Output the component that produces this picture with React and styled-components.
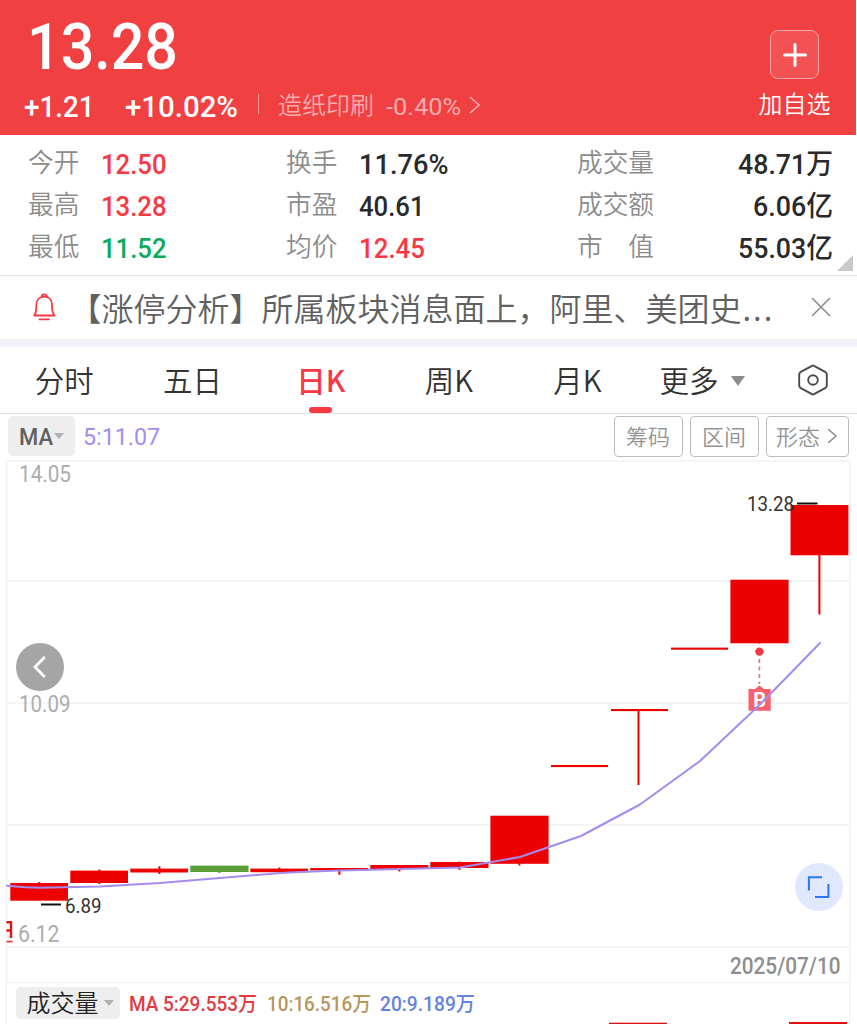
import React from "react";
import styled, { createGlobalStyle } from "styled-components";

const CJK = '"Noto Sans CJK SC", sans-serif';
const DIGITS = 'Roboto, "Noto Sans CJK SC", sans-serif';

const Global = createGlobalStyle`
  * { box-sizing: border-box; }
  body { margin: 0; background: #fff; font-family: ${CJK}; overflow: hidden; }
  svg { display: block; flex: none; }
`;

const Page = styled.main`
  width: 857px;
  height: 1024px;
  overflow: hidden;
  background: #fff;
  display: flex;
  flex-direction: column;
`;

/* Condensed figures: the glyphs are fitted to the given width. */
const FigureSvg = styled.svg`
  overflow: visible;
  font-family: ${DIGITS};
  font-size: ${(p) => p.$size}px;
  font-weight: ${(p) => p.$weight};
  fill: ${(p) => p.$color};
`;

function Figure({ children, width, size, color, weight = 500 }) {
  const h = Math.round(size * 0.72);
  return (
    <FigureSvg width={width} height={h} $size={size} $color={color} $weight={weight}>
      <text x="0" y={h} textLength={width} lengthAdjust="spacingAndGlyphs">{children}</text>
    </FigureSvg>
  );
}

const Header = styled.header`
  flex: none;
  width: 856px;
  height: 135px;
  background: #f04042;
  display: flex;
  justify-content: space-between;
`;

const Quote = styled.div`
  padding: 23px 0 0 27px;
`;

const ChangeRow = styled.div`
  display: flex;
  align-items: center;
  height: 30px;
  margin: 22px 0 0 -3px;
`;

const Divider = styled.i`
  width: 1px;
  height: 20px;
  margin: 0 19px 4px 20px;
  background: #f79a9b;
`;

const Sector = styled.span`
  width: 97px;
  margin: -4px 10.5px 0 0;
  font-size: 24px;
  line-height: 30px;
  font-weight: 350;
  color: #f9abac;
  white-space: nowrap;
`;

const Spacer = styled.span`
  width: ${(p) => p.$w}px;
`;

const AddButton = styled.button`
  border: 0;
  padding: 30px 25.5px 0 0;
  background: none;
  display: flex;
  flex-direction: column;
  align-items: center;
  color: #fff;
  font: 350 24px/34px ${CJK};
`;

const AddBox = styled.span`
  width: 49px;
  height: 49px;
  border: 1px solid #f8a3a4;
  border-radius: 8px;
  background: #f25254;
  margin-bottom: 7px;
  display: grid;
  place-items: center;
`;

const Stats = styled.section`
  flex: none;
  height: 141px;
  border-bottom: 1px solid #e8e8e8;
  padding: 7px 24px 0 28px;
  display: grid;
  grid-template-columns: 258px 291px 1fr;
  grid-auto-rows: 42px;
  position: relative;
`;

const Stat = styled.div`
  display: flex;
  align-items: center;
  justify-content: ${(p) => (p.$spread ? "space-between" : "flex-start")};
  padding-top: 1px;
`;

const StatLabel = styled.span`
  width: ${(p) => p.$w}px;
  font-size: 25.7px;
  line-height: 38px;
  font-weight: 350;
  color: #8c8c8c;
  white-space: pre;
  margin-top: -6px;
`;

const Corner = styled.i`
  position: absolute;
  right: 4px;
  bottom: 4px;
  border-style: solid;
  border-width: 0 0 16px 16px;
  border-color: transparent transparent #c9c9c9 transparent;
`;

const Notice = styled.section`
  flex: none;
  height: 63px;
  padding: 0 26px 0 33px;
  display: flex;
  align-items: center;
`;

const NoticeText = styled.p`
  flex: 1;
  margin: 0 0 2px 13.5px;
  font-size: 32px;
  line-height: 46px;
  font-weight: 350;
  color: #606060;
  white-space: nowrap;
`;

const Dots = styled.span`
  letter-spacing: 2px;
  margin-left: 1px;
`;

const Band = styled.div`
  flex: none;
  height: 8px;
  background: #f2f3f9;
`;

const Tabs = styled.nav`
  flex: none;
  height: 67px;
  border-bottom: 1px solid #e0e0e0;
  display: flex;
`;

const Tab = styled.div`
  width: 128.3px;
  display: flex;
  flex-direction: column;
  align-items: center;
  justify-content: space-between;
  padding-top: 11px;
  font-size: 29.5px;
  line-height: 42px;
  font-weight: ${(p) => (p.$active ? 500 : 350)};
  color: ${(p) => (p.$active ? "#f93844" : "#333")};
  &::after {
    content: "";
    width: 23px;
    height: 6px;
    border-radius: 3px;
    background: ${(p) => (p.$active ? "#f93844" : "transparent")};
  }
`;

const MoreTab = styled.div`
  width: 156.5px;
  padding: 11px 0 0 18px;
  display: flex;
  gap: 12px;
  font-size: 29.5px;
  line-height: 42px;
  font-weight: 350;
  color: #333;
`;

const Caret = styled.i`
  align-self: ${(p) => (p.$top ? "flex-start" : "center")};
  margin-top: ${(p) => p.$top || 0}px;
  border: solid transparent;
  border-width: ${(p) => p.$h}px ${(p) => p.$half}px 0;
  border-top-color: ${(p) => p.$color};
`;

const Toolbar = styled.div`
  flex: none;
  height: 46px;
  padding: 2px 8px 4px;
  display: flex;
  align-items: center;
`;

const Chip = styled.span`
  flex: none;
  width: ${(p) => p.$w}px;
  height: ${(p) => p.$h}px;
  padding-left: ${(p) => p.$pad || 0}px;
  border-radius: 5px;
  background: #eee;
  display: flex;
  align-items: center;
  justify-content: center;
  gap: ${(p) => p.$gap}px;
  font-size: 24px;
  line-height: 30px;
  font-weight: 350;
  color: #222;
`;

const ChipLabel = styled.span`
  margin-top: -2px;
`;

const ToolButtons = styled.div`
  margin-left: auto;
  display: flex;
  gap: 7px;
`;

const ToolButton = styled.button`
  width: ${(p) => p.$w}px;
  height: 41px;
  padding: 0 1px 3px 0;
  border: 1.5px solid #bdbdbd;
  border-radius: 4px;
  background: #fff;
  display: flex;
  align-items: center;
  justify-content: center;
  gap: 8px;
  font: 350 22px/32px ${CJK};
  color: #949494;
`;

const ChartArea = styled.section`
  flex: none;
  height: 523px;
  position: relative;
  svg text { font-family: ${DIGITS}; }
`;

const RoundButton = styled.button`
  position: absolute;
  left: ${(p) => p.$x}px;
  top: ${(p) => p.$y}px;
  width: 48px;
  height: 48px;
  padding: 0;
  border: 0;
  border-radius: 50%;
  background: ${(p) => p.$bg};
  display: grid;
  place-items: center;
`;

const Volume = styled.section`
  flex: none;
  height: 41px;
  margin: 0 7px 0 6px;
  border: solid #f2f2f2;
  border-width: 0 1.5px;
  display: flex;
  flex-direction: column;
`;

const VolumeHead = styled.div`
  height: 38px;
  padding: 4px 0 2px 9px;
  display: flex;
  align-items: center;
`;

const STATS = [
  ["今开", "12.50", "#f93844", 65.5], ["换手", "11.76%", "#2a2a2a", 89.5], ["成交量", "48.71万", "#2a2a2a", 95],
  ["最高", "13.28", "#f93844", 65.5], ["市盈", "40.61", "#2a2a2a", 65.5], ["成交额", "6.06亿", "#2a2a2a", 80],
  ["最低", "11.52", "#0bab5c", 65.5], ["均价", "12.45", "#f93844", 66], ["市　值", "55.03亿", "#2a2a2a", 95],
];

const RED = "#ed0000";
/* left, top, width, height, wick top, wick bottom */
const CANDLES = [
  [10.3, 883, 57.7, 17.7, 882, 900],
  [70.3, 870.6, 57.7, 12.4, 869.5, 884],
  [130.3, 868.6, 57.7, 3.9, 866.3, 874],
  [190.3, 865.6, 58.2, 6.4, 866, 873, "#5b9e37"],
  [250.3, 868.6, 57.7, 3.6, 867.5, 872],
  [310.3, 868, 57.7, 2.5, 868, 874.8],
  [370.3, 865, 57.9, 4, 865, 871.5],
  [430.3, 862, 58.2, 6, 861.5, 869.8],
  [490.4, 815.7, 58.2, 48.1, 816, 865.5],
  [551, 765, 57, 2.1, 765, 766],
  [611, 709, 57, 2.1, 709, 785],
  [671, 647.6, 57, 2.1, 648, 649],
  [730.4, 579.7, 58.2, 63.6, 580, 643.5],
  [790.5, 505, 57.9, 50.3, 505, 614.5],
];
const MA5 = "7,885.7 25,887.2 40,887.8 100,886.6 160,883 220,878 280,873 300,872 340,870.4 400,869 460,867.6 520,857 581,836 640,804.5 700,761 760,704.5 820,643";

function AxisText({ x, y, w, children, size = 24, color = "#adadad" }) {
  return <text x={x} y={y} textLength={w} lengthAdjust="spacingAndGlyphs" fontSize={size} fill={color}>{children}</text>;
}

function KChart() {
  return (
    <svg width="857" height="523" viewBox="0 460 857 523">
      <g fill="none" stroke="#f2f2f2" strokeWidth="1.6">
        <path d="M6.5 983V460.8H849.8V983" />
        <path d="M6.5 581H850M6.5 703H850M6.5 825H850M6.5 947H850M6.5 982.8H850" />
      </g>
      <AxisText x={19} y={482.3} w={52}>14.05</AxisText>
      <AxisText x={19} y={712} w={51.5}>10.09</AxisText>
      <AxisText x={18} y={942} w={41.5}>6.12</AxisText>
      {CANDLES.map(([x, y, w, h, t, b, c = RED]) => (
        <g key={x} fill={c}>
          <rect x={x} y={y} width={w} height={h} />
          <rect x={Math.round(x / 10) * 10 + (x % 10 > 0.8 ? 27.5 : 28.4)} y={t} width="2" height={b - t} />
        </g>
      ))}
      <path d="M797 503.4H817.5M41 904.6H61" stroke="#111" strokeWidth="2" />
      <AxisText x={747} y={511} w={47} size={20} color="#333">13.28</AxisText>
      <AxisText x={65} y={912.5} w={36.5} size={20} color="#333">6.89</AxisText>
      <path d="M6.5 922.2H12M11 921V938M6.5 930.5H10.5" fill="none" stroke="#e81212" strokeWidth="2.4" />
      <path d="M6.5 941.6H12.5" stroke="#d83030" strokeWidth="1.6" />
      <circle cx="759.4" cy="651.6" r="4.2" fill="#f93844" />
      <path d="M759.4 659V684" stroke="#f2707a" strokeWidth="1.6" strokeDasharray="4 3.5" />
      <path d="M748.5 689H755L759.4 685.5L764 689H770.7V710.7H748.5Z" fill="#f8606c" />
      <text x="759.6" y="707" textAnchor="middle" fontSize="20" fontWeight="700" fill="#fff">B</text>
      <polyline points={MA5} fill="none" stroke="#a58bf0" strokeWidth="2" strokeLinejoin="round" strokeLinecap="round" />
      <text x="730" y="974" textLength="110.5" lengthAdjust="spacingAndGlyphs" fontSize="23" fontWeight="500" fill="#8e8e8e">2025/07/10</text>
    </svg>
  );
}

export default function App() {
  return (
    <Page>
      <Global />
      <Header>
        <Quote>
          <Figure width={151} size={64.5} color="#fff">13.28</Figure>
          <ChangeRow>
            <Figure width={70.5} size={29} color="#fff">+1.21</Figure>
            <Spacer $w={30.5} />
            <Figure width={113} size={29} color="#fff">+10.02%</Figure>
            <Divider />
            <Sector>造纸印刷</Sector>
            <Figure width={75} size={24.5} color="#f9abac" weight={400}>-0.40%</Figure>
            <Spacer $w={8} />
            <svg width="12" height="20" fill="none" stroke="#f9abac" strokeWidth="1.6"><path d="M1 1L10 9L1 17" /></svg>
          </ChangeRow>
        </Quote>
        <AddButton>
          <AddBox>
            <svg width="26" height="26" stroke="#fff" strokeWidth="3" strokeLinecap="round"><path d="M2.5 13H23.5M13 2.5V23.5" /></svg>
          </AddBox>
          加自选
        </AddButton>
      </Header>

      <Stats>
        {STATS.map(([label, value, color, width], i) => (
          <Stat key={label} $spread={i % 3 === 2}>
            <StatLabel $w={i % 3 === 2 ? 80 : 72.7}>{label}</StatLabel>
            <Figure width={width} size={28} color={color}>{value}</Figure>
          </Stat>
        ))}
        <Corner />
      </Stats>

      <Notice>
        <svg width="23" height="29" fill="none" stroke="#f93844" strokeWidth="1.8" strokeLinejoin="round" strokeLinecap="round">
          <path d="M1.2 22.5C3.2 20 3.4 18 3.4 12C3.4 7 6.5 3.7 11.2 3.7S19 7 19 12C19 18 19.5 20 21.5 22.5ZM8.5 3.7C9 .6 13.5 .6 14 3.7M6.5 26.3H16" />
        </svg>
        <NoticeText>【涨停分析】所属板块消息面上，阿里、美团史<Dots>...</Dots></NoticeText>
        <svg width="20" height="20" stroke="#8a8a8a" strokeWidth="1.5"><path d="M1 0L19 18M19 0L1 18" /></svg>
      </Notice>
      <Band />

      <Tabs>
        <Tab>分时</Tab>
        <Tab>五日</Tab>
        <Tab $active>日K</Tab>
        <Tab>周K</Tab>
        <Tab>月K</Tab>
        <MoreTab>更多<Caret $top={18} $h={10} $half={7.5} $color="#8c8c8c" /></MoreTab>
        <svg width="32" height="66" viewBox="0 0 32 66" fill="none" stroke="#4a4a4a" strokeWidth="1.9" strokeLinejoin="round">
          <path d="M14 18.8Q15 18.2 16 18.8L27.6 25.2Q28.8 26 28.8 27.5V38.5Q28.8 40 27.6 40.8L16 47.2Q15 47.8 14 47.2L2.4 40.8Q1.2 40 1.2 38.5V27.5Q1.2 26 2.4 25.2Z" />
          <circle cx="15" cy="33" r="4.8" />
        </svg>
      </Tabs>

      <Toolbar>
        <Chip $w={67} $h={40} $gap={1}>
          <Figure width={34} size={24} color="#606060">MA</Figure>
          <Caret $h={6} $half={5} $color="#b0b0b0" />
        </Chip>
        <Spacer $w={8} />
        <Figure width={77} size={24} color="#a58bf0" weight={400}>5:11.07</Figure>
        <ToolButtons>
          <ToolButton $w={69}>筹码</ToolButton>
          <ToolButton $w={69}>区间</ToolButton>
          <ToolButton $w={83}>
            形态
            <svg width="10" height="16" fill="none" stroke="#8a8a8a" strokeWidth="1.4"><path d="M0 2L8 9L0 16" /></svg>
          </ToolButton>
        </ToolButtons>
      </Toolbar>

      <ChartArea>
        <KChart />
        <RoundButton $x={16} $y={183} $bg="#a5a5a5">
          <svg width="48" height="48" fill="none" stroke="#fff" strokeWidth="2.8"><path d="M28.8 14L19 24L28.8 34" /></svg>
        </RoundButton>
        <RoundButton $x={794.5} $y={403} $bg="#e0e8fe">
          <svg width="48" height="48" fill="none" stroke="#2b76f5" strokeWidth="2"><path d="M27 14.3H13.9V27.5M20 34H33.4V21" /></svg>
        </RoundButton>
      </ChartArea>

      <Volume>
        <VolumeHead>
          <Chip $w={104} $h={32} $gap={5} $pad={4}><ChipLabel>成交量</ChipLabel><Caret $h={6} $half={5} $color="#b0b0b0" /></Chip>
          <Spacer $w={9} />
          <Figure width={128} size={20.5} color="#e23b3f">MA 5:29.553万</Figure>
          <Spacer $w={10} />
          <Figure width={104} size={20.5} color="#b7955c">10:16.516万</Figure>
          <Spacer $w={9} />
          <Figure width={95} size={20.5} color="#6681de">20:9.189万</Figure>
        </VolumeHead>
        <svg width="841" height="3" fill="#e01010">
          <rect x="602" y="1.7" width="58" height="2" />
          <rect x="782" y="1" width="58" height="2" />
        </svg>
      </Volume>
    </Page>
  );
}
